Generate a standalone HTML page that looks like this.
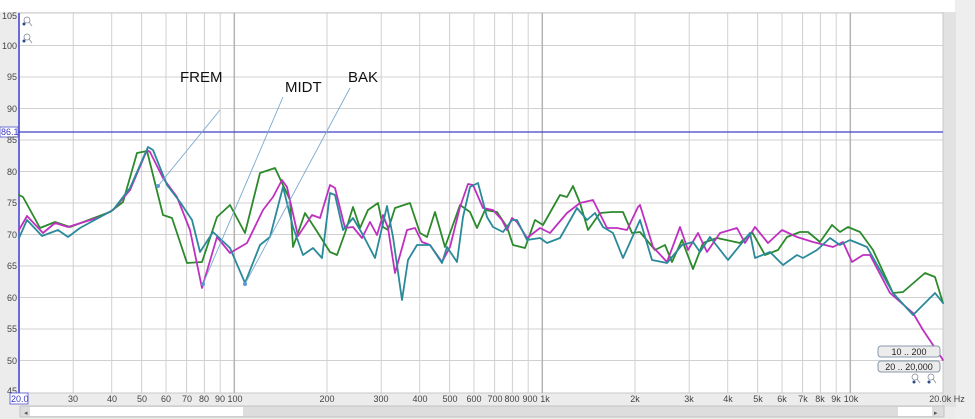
<!DOCTYPE html>
<html><head><meta charset="utf-8"><style>
html,body{margin:0;padding:0;width:975px;height:419px;overflow:hidden;background:#fff;font-family:"Liberation Sans",sans-serif}
</style></head><body>
<svg width="975" height="419" viewBox="0 0 975 419" xmlns="http://www.w3.org/2000/svg" font-family="Liberation Sans, sans-serif">
<rect x="0" y="0" width="975" height="419" fill="#ececec"/>
<rect x="0" y="0" width="955" height="12" fill="#fff"/>
<rect x="955" y="0" width="20" height="419" fill="#eeeeee"/>
<rect x="942" y="12" width="14" height="395" fill="#e2e2e2"/>
<rect x="19" y="13" width="924" height="380" fill="#fff" stroke="#c8c8c8"/>
<g stroke="#d0d0d0" stroke-width="1">
<line x1="19" x2="943" y1="45.5" y2="45.5"/><line x1="19" x2="943" y1="77" y2="77"/><line x1="19" x2="943" y1="108.5" y2="108.5"/><line x1="19" x2="943" y1="140" y2="140"/><line x1="19" x2="943" y1="171.5" y2="171.5"/><line x1="19" x2="943" y1="203" y2="203"/><line x1="19" x2="943" y1="234.5" y2="234.5"/><line x1="19" x2="943" y1="266" y2="266"/><line x1="19" x2="943" y1="297.5" y2="297.5"/><line x1="19" x2="943" y1="329" y2="329"/><line x1="19" x2="943" y1="360.5" y2="360.5"/>
<line x1="73.2" x2="73.2" y1="13" y2="393"/><line x1="111.7" x2="111.7" y1="13" y2="393"/><line x1="141.6" x2="141.6" y1="13" y2="393"/><line x1="166" x2="166" y1="13" y2="393"/><line x1="186.6" x2="186.6" y1="13" y2="393"/><line x1="204.4" x2="204.4" y1="13" y2="393"/><line x1="220.2" x2="220.2" y1="13" y2="393"/>
<line x1="327" x2="327" y1="13" y2="393"/><line x1="381.2" x2="381.2" y1="13" y2="393"/><line x1="419.7" x2="419.7" y1="13" y2="393"/><line x1="449.6" x2="449.6" y1="13" y2="393"/><line x1="474" x2="474" y1="13" y2="393"/><line x1="494.6" x2="494.6" y1="13" y2="393"/><line x1="512.4" x2="512.4" y1="13" y2="393"/><line x1="528.2" x2="528.2" y1="13" y2="393"/>
<line x1="635" x2="635" y1="13" y2="393"/><line x1="689.2" x2="689.2" y1="13" y2="393"/><line x1="727.7" x2="727.7" y1="13" y2="393"/><line x1="757.6" x2="757.6" y1="13" y2="393"/><line x1="782" x2="782" y1="13" y2="393"/><line x1="802.6" x2="802.6" y1="13" y2="393"/><line x1="820.4" x2="820.4" y1="13" y2="393"/><line x1="836.2" x2="836.2" y1="13" y2="393"/>
</g>
<g stroke="#b4b4b4" stroke-width="1.5">
<line x1="234.3" x2="234.3" y1="13" y2="393"/><line x1="542.3" x2="542.3" y1="13" y2="393"/><line x1="850.3" x2="850.3" y1="13" y2="393"/>
</g>
<line x1="19" x2="19" y1="13" y2="393" stroke="#6a6ad8" stroke-width="2"/>
<line x1="0" x2="943" y1="132" y2="132" stroke="#4040c8" stroke-width="1.2"/>
<rect x="0" y="127" width="18" height="10" fill="#fff" stroke="#5050d0" stroke-width="0.8"/>
<text x="1" y="135" font-size="9" fill="#3a3ac0">86.1</text>
<g font-size="9" fill="#444" text-anchor="end">
<text x="17" y="19">105</text><text x="17" y="49">100</text><text x="17" y="80">95</text><text x="17" y="112">90</text><text x="17" y="143">85</text><text x="17" y="175">80</text><text x="17" y="206">75</text><text x="17" y="238">70</text><text x="17" y="269">65</text><text x="17" y="301">60</text><text x="17" y="332">55</text><text x="17" y="364">50</text><text x="17" y="394">45</text>
</g>
<rect x="10" y="393" width="18" height="11" fill="#fff" stroke="#5050d0" stroke-width="0.8"/>
<text x="11" y="402" font-size="9" fill="#3a3ac0">20.0</text>
<g font-size="9" fill="#444" text-anchor="middle">
<text x="73" y="402">30</text><text x="112" y="402">40</text><text x="142" y="402">50</text><text x="166" y="402">60</text><text x="187" y="402">70</text><text x="204" y="402">80</text><text x="220" y="402">90</text><text x="235" y="402">100</text>
<text x="327" y="402">200</text><text x="381" y="402">300</text><text x="420" y="402">400</text><text x="450" y="402">500</text><text x="474" y="402">600</text><text x="495" y="402">700</text><text x="512" y="402">800</text><text x="530" y="402">900</text><text x="545" y="402">1k</text>
<text x="635" y="402">2k</text><text x="689" y="402">3k</text><text x="728" y="402">4k</text><text x="758" y="402">5k</text><text x="782" y="402">6k</text><text x="803" y="402">7k</text><text x="820" y="402">8k</text><text x="836" y="402">9k</text><text x="851" y="402">10k</text>
<text x="947" y="402">20.0k Hz</text>
</g>
<rect x="20" y="406" width="924" height="11" fill="#ddd" stroke="#bbb" stroke-width="0.8"/>
<rect x="30" y="407" width="213" height="9" fill="#fff"/>
<rect x="898" y="407" width="34" height="9" fill="#fff"/>
<text x="24" y="415" font-size="7" fill="#555">◂</text><text x="934" y="415" font-size="7" fill="#555">▸</text>
<g fill="none" stroke-width="1.8" stroke-linejoin="round" stroke-linecap="round">
<polyline stroke="#2b8a2b" points="19,195 23,197 40,228 55,222 70,227 110,212 123,202 137,153 147,151 163,215 172,218 187,263 202,262 217,217 230,205 245,233 260,173 275,168 290,200 293,247 305,213 318,233 330,252 337,255 345,233 353,207 360,228 368,210 378,203 383,227 388,230 395,208 410,203 420,233 427,237 435,212 445,247 460,205 470,212 477,228 485,210 497,212 507,227 513,245 525,248 535,220 543,225 560,195 567,197 573,186 580,203 588,230 600,213 612,212 623,212 632,233 640,232 655,250 665,245 672,262 682,240 693,269 703,243 717,238 740,243 752,232 765,255 778,250 787,237 800,232 808,232 820,242 832,225 840,232 848,227 860,232 873,250 893,293 903,292 925,273 935,277 943,303"/>
<polyline stroke="#c030c0" points="19,230 27,216 43,233 55,223 68,227 100,217 113,210 130,190 147,150 150,152 163,178 177,197 190,230 202,288 217,237 230,253 247,243 263,210 273,197 282,180 287,187 298,236 312,215 320,218 330,185 335,188 345,228 353,227 362,238 370,222 377,235 383,215 388,228 395,273 407,230 415,228 422,242 430,245 442,262 450,247 460,207 468,184 473,185 483,208 493,210 502,220 507,230 512,218 517,222 527,238 540,228 550,233 567,213 580,203 593,200 607,228 617,228 627,230 638,207 640,205 653,247 667,262 680,227 688,250 698,233 707,252 720,233 737,228 745,243 755,227 768,243 782,230 797,237 813,242 833,247 843,242 852,262 863,255 870,255 890,293 913,313 923,330 935,348 943,360"/>
<polyline stroke="#2a8a9a" points="19,238 27,220 42,236 58,230 68,237 80,228 113,210 130,188 148,147 153,150 167,185 180,202 192,220 200,252 213,232 230,248 245,283 260,245 270,237 283,187 293,227 303,255 313,248 322,258 330,193 335,195 343,230 353,218 363,235 375,258 387,206 393,237 402,300 408,260 417,245 430,245 442,263 447,247 457,262 463,217 470,187 478,183 487,217 493,227 503,232 512,220 517,220 527,240 540,238 547,243 560,238 577,208 587,220 595,213 603,227 613,233 623,258 640,220 652,260 667,263 682,245 693,242 700,252 710,237 728,260 750,233 755,258 770,252 783,265 797,255 803,258 817,250 830,238 840,245 850,240 867,247 893,293 913,315 935,293 943,303"/>
</g>
<g stroke="#7aaad0" stroke-width="0.9">
<line x1="220" y1="110" x2="158" y2="186"/><line x1="283" y1="97" x2="203" y2="284"/><line x1="350" y1="88" x2="245" y2="284"/>
</g>
<g fill="#5a9ad0"><circle cx="158" cy="186" r="2"/><circle cx="203" cy="284" r="2"/><circle cx="245" cy="284" r="2"/></g>
<g font-size="15" fill="#111">
<text x="180" y="82">FREM</text><text x="285" y="92">MIDT</text><text x="348" y="82">BAK</text>
</g>
<g stroke="#8899aa" stroke-width="1">
<rect x="878" y="346" width="62" height="11" rx="3" fill="#ececec"/><rect x="878" y="361" width="62" height="11" rx="3" fill="#ececec"/>
</g>
<text x="909" y="355" font-size="9" fill="#222" text-anchor="middle">10 .. 200</text>
<text x="909" y="370" font-size="9" fill="#222" text-anchor="middle">20 .. 20,000</text>
<g fill="none" stroke="#889" stroke-width="0.8">
<circle cx="27" cy="20" r="3"/><line x1="29" y1="22" x2="32" y2="26"/><circle cx="27" cy="37" r="3"/><line x1="29" y1="39" x2="32" y2="43"/>
<circle cx="915" cy="377" r="3"/><line x1="917" y1="379" x2="920" y2="383"/><circle cx="931" cy="377" r="3"/><line x1="933" y1="379" x2="936" y2="383"/>
</g>
<g fill="#2a4a8a"><circle cx="24" cy="24" r="1.5"/><circle cx="24" cy="41" r="1.5"/><circle cx="914" cy="382" r="1.5"/><circle cx="929" cy="382" r="1.5"/></g>
</svg>
</body></html>
